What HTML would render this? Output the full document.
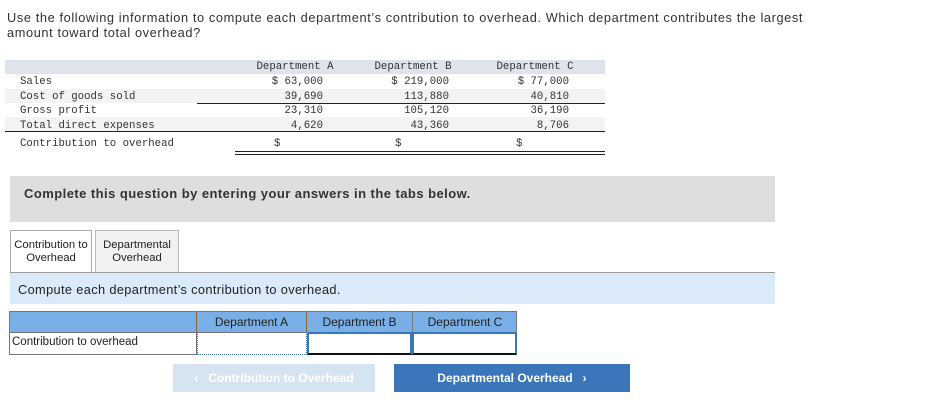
<!DOCTYPE html>
<html><head><meta charset="utf-8"><style>
body{margin:0;width:937px;height:410px;background:#fff;position:relative;font-family:"Liberation Sans",sans-serif;color:#222;overflow:hidden}
.a{position:absolute;white-space:nowrap}
.m{font-family:"Liberation Mono",monospace;font-size:10.7px;color:#333}
.r{text-align:right}
.c{text-align:center}
</style></head><body>
<div class="a" style="left:7px;top:10px;font-size:12.8px;letter-spacing:0.6px;line-height:15px;color:#333">Use the following information to compute each department’s contribution to overhead. Which department contributes the largest<br>amount toward total overhead?</div>

<div class="a" style="left:5px;top:60px;width:600px;height:14px;background:#dfe3eb"></div>
<div class="a" style="left:5px;top:89px;width:600px;height:14px;background:#f3f3f3"></div>
<div class="a" style="left:5px;top:117px;width:600px;height:14px;background:#f3f3f3"></div>
<div class="a" style="left:197px;top:103px;width:408px;height:1px;background:#222"></div>
<div class="a" style="left:5px;top:131px;width:600px;height:1px;background:#222"></div>
<div class="a" style="left:235px;top:151px;width:370px;height:1px;background:#222"></div>
<div class="a" style="left:235px;top:154px;width:370px;height:1px;background:#222"></div>

<div class="a m c" style="left:250px;top:61px;width:90px">Department A</div>
<div class="a m c" style="left:368px;top:61px;width:90px">Department B</div>
<div class="a m c" style="left:490px;top:61px;width:90px">Department C</div>

<div class="a m" style="left:20px;top:76px">Sales</div>
<div class="a m" style="left:20px;top:91px">Cost of goods sold</div>
<div class="a m" style="left:20px;top:105px">Gross profit</div>
<div class="a m" style="left:20px;top:120px">Total direct expenses</div>
<div class="a m" style="left:20px;top:138px">Contribution to overhead</div>

<div class="a m r" style="left:223px;top:76px;width:100px">$ 63,000</div>
<div class="a m r" style="left:223px;top:91px;width:100px">39,690</div>
<div class="a m r" style="left:223px;top:105px;width:100px">23,310</div>
<div class="a m r" style="left:223px;top:120px;width:100px">4,620</div>
<div class="a m" style="left:274px;top:138px">$</div>

<div class="a m r" style="left:349px;top:76px;width:100px">$ 219,000</div>
<div class="a m r" style="left:349px;top:91px;width:100px">113,880</div>
<div class="a m r" style="left:349px;top:105px;width:100px">105,120</div>
<div class="a m r" style="left:349px;top:120px;width:100px">43,360</div>
<div class="a m" style="left:395px;top:138px">$</div>

<div class="a m r" style="left:469px;top:76px;width:100px">$ 77,000</div>
<div class="a m r" style="left:469px;top:91px;width:100px">40,810</div>
<div class="a m r" style="left:469px;top:105px;width:100px">36,190</div>
<div class="a m r" style="left:469px;top:120px;width:100px">8,706</div>
<div class="a m" style="left:516px;top:138px">$</div>

<div class="a" style="left:10px;top:176px;width:765px;height:46px;background:#dedede"></div>
<div class="a" style="left:24px;top:186px;font-size:13px;letter-spacing:0.45px;font-weight:bold;color:#333">Complete this question by entering your answers in the tabs below.</div>

<div class="a" style="left:10px;top:272px;width:765px;height:1px;background:#999"></div>
<div class="a c" style="left:10px;top:230px;width:82px;height:42px;border:1px solid #aaa;border-bottom:none;background:#fff;font-size:11.3px;line-height:13px;padding-top:8px;box-sizing:border-box">Contribution to<br>Overhead</div>
<div class="a c" style="left:95px;top:230px;width:84px;height:42px;border:1px solid #bbb;border-bottom:none;background:#f1f1f1;font-size:11.3px;line-height:13px;padding-top:8px;box-sizing:border-box">Departmental<br>Overhead</div>

<div class="a" style="left:10px;top:273px;width:765px;height:31px;background:#dbeaf8"></div>
<div class="a" style="left:18px;top:282px;font-size:12.8px;letter-spacing:0.35px;color:#222">Compute each department’s contribution to overhead.</div>

<div class="a" style="left:9px;top:311px;width:508px;height:22px;background:#7aaee6;border:1px solid #777;box-sizing:border-box"></div>
<div class="a" style="left:196px;top:311px;width:1px;height:22px;background:#8a6a2a"></div>
<div class="a" style="left:306px;top:311px;width:1px;height:22px;background:#8a6a2a"></div>
<div class="a" style="left:412px;top:311px;width:1px;height:22px;background:#777"></div>
<div class="a c" style="left:197px;top:315px;width:109px;font-size:12px">Department A</div>
<div class="a c" style="left:307px;top:315px;width:105px;font-size:12px">Department B</div>
<div class="a c" style="left:413px;top:315px;width:104px;font-size:12px">Department C</div>
<div class="a" style="left:9px;top:332px;width:188px;height:23px;border:1px solid #777;border-top:none;box-sizing:border-box"></div>
<div class="a" style="left:12px;top:336px;font-size:11.5px">Contribution to overhead</div>
<div class="a" style="left:197px;top:332px;width:110px;height:23px;border:1px dotted #3a76b9;border-top:none;box-sizing:border-box"></div>
<div class="a" style="left:307px;top:332px;width:105px;height:23px;border:2px solid #3a76b9;border-bottom:2px solid #111;box-sizing:border-box"></div>
<div class="a" style="left:412px;top:332px;width:105px;height:23px;border:2px solid #3a76b9;border-bottom:2px solid #111;box-sizing:border-box"></div>

<div class="a c" style="left:173px;top:364px;width:202px;height:28px;background:#d6e3f1;color:#fff;font-size:12px;font-weight:bold;line-height:28px">‹&nbsp;&nbsp; Contribution to Overhead</div>
<div class="a c" style="left:394px;top:364px;width:236px;height:28px;background:#3a76b9;color:#fff;font-size:12px;font-weight:bold;line-height:28px">Departmental Overhead &nbsp;&nbsp;›</div>
</body></html>
